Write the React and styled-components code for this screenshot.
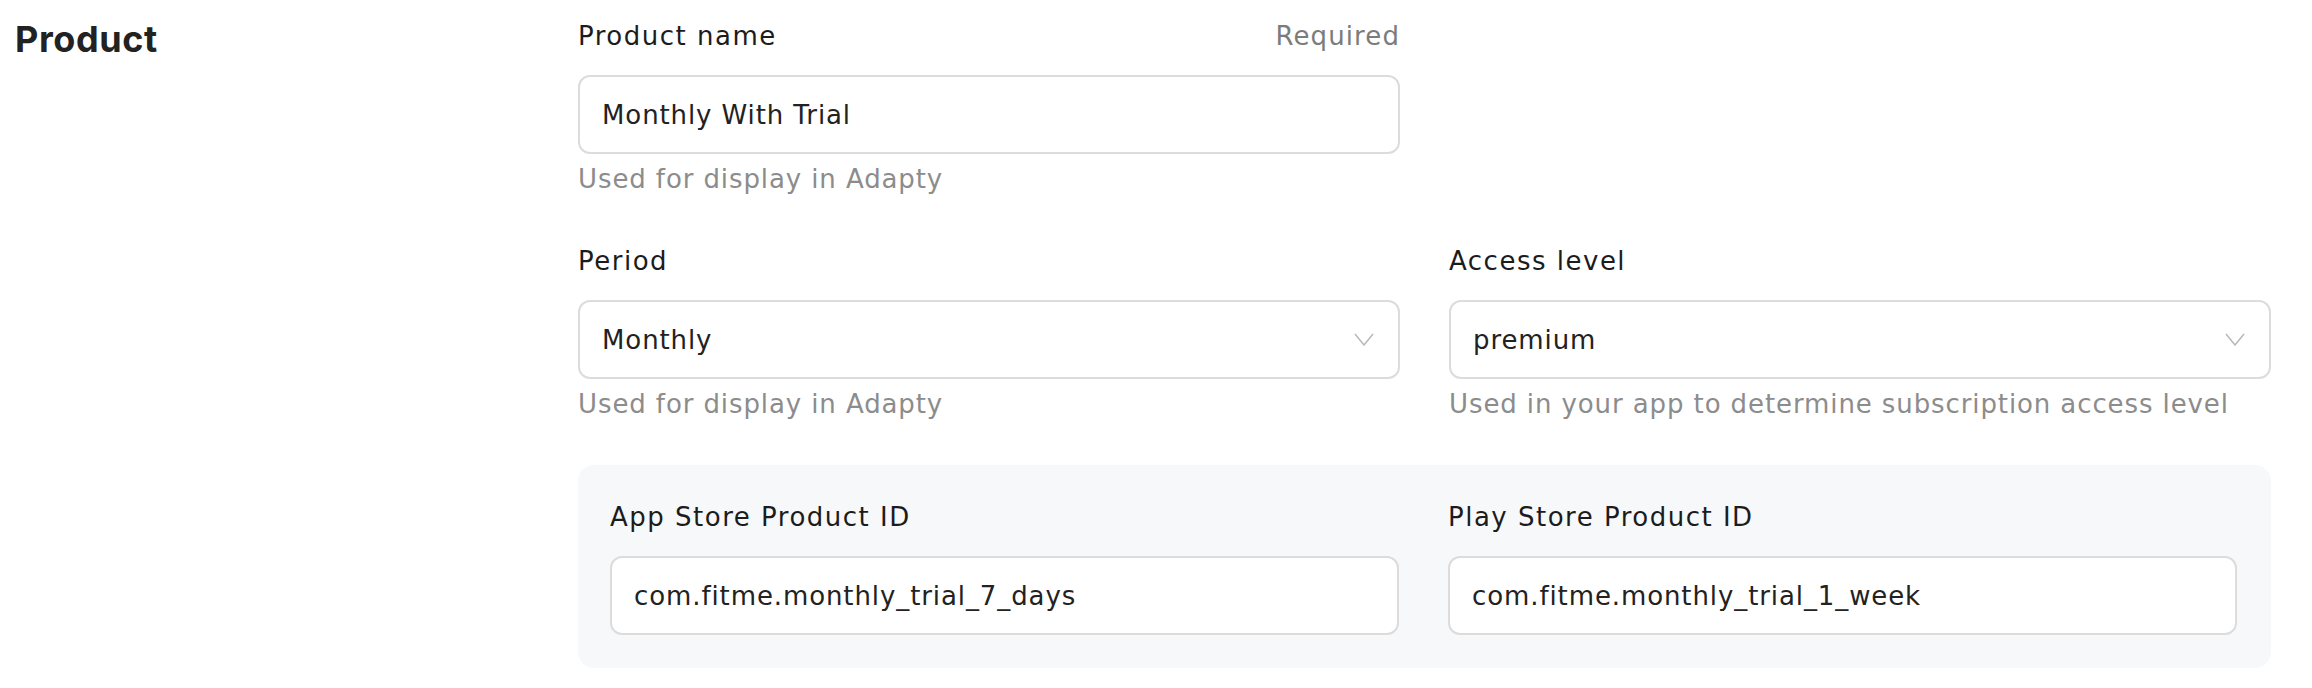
import styled, { createGlobalStyle } from "styled-components";

const GlobalStyle = createGlobalStyle`
  body {
    margin: 0;
    background: #fff;
    font-family: "DejaVu Sans", "Inter", sans-serif;
    color: #1f1f1f;
  }
`;

const Chevron = () => (
  <svg width="20" height="13" viewBox="0 0 20 13" fill="none">
    <polyline points="1,1 10,12 19,1" stroke="#b8b8b8" strokeWidth="1.5" />
  </svg>
);

const Field = ({ label, hint, value, required, select }) => (
  <FieldWrap>
    <LabelRow>
      <Label>{label}</Label>
      {required && <Required>Required</Required>}
    </LabelRow>
    <InputBox>
      <Value>{value}</Value>
      {select && <Chevron />}
    </InputBox>
    {hint && <Hint>{hint}</Hint>}
  </FieldWrap>
);

const App = () => {
  return (
    <>
      <GlobalStyle />
      <Section>
        <Heading>Product</Heading>
        <Form>
          <Row>
            <Field
              label="Product name"
              required
              value="Monthly With Trial"
              hint="Used for display in Adapty"
            />
            <div />
          </Row>
          <Row>
            <Field
              label="Period"
              value="Monthly"
              select
              hint="Used for display in Adapty"
            />
            <Field
              label="Access level"
              value="premium"
              select
              hint="Used in your app to determine subscription access level"
            />
          </Row>
          <StorePanel>
            <Field label="App Store Product ID" value="com.fitme.monthly_trial_7_days" />
            <Field label="Play Store Product ID" value="com.fitme.monthly_trial_1_week" />
          </StorePanel>
        </Form>
      </Section>
    </>
  );
};

export default App;

const Section = styled.div`
  display: flex;
  width: 2312px;
`;

const Heading = styled.h2`
  width: 563px;
  margin: 0;
  padding: 19px 0 0 15px;
  font-family: "Inter", sans-serif;
  font-size: 36px;
  line-height: 40px;
  font-weight: 700;
  letter-spacing: 0.6px;
  color: #222;
`;

const Form = styled.div`
  width: 1693px;
  padding-top: 18px;
  display: flex;
  flex-direction: column;
  gap: 46px;
`;

const Row = styled.div`
  display: grid;
  grid-template-columns: 1fr 1fr;
  column-gap: 49px;
`;

const FieldWrap = styled.div`
  display: flex;
  flex-direction: column;
`;

const LabelRow = styled.div`
  display: flex;
  justify-content: space-between;
  align-items: center;
  height: 36px;
  margin-bottom: 21px;
`;

const Label = styled.span`
  font-size: 26px;
  letter-spacing: 1.5px;
  color: #1c1c1c;
`;

const Required = styled.span`
  font-size: 26px;
  letter-spacing: 1.1px;
  color: #7c7c7c;
`;

const InputBox = styled.div`
  box-sizing: border-box;
  height: 79px;
  border: 2px solid #dcdcdc;
  border-radius: 12px;
  background: #fff;
  display: flex;
  align-items: center;
  justify-content: space-between;
  padding: 0 24px 0 22px;
`;

const Value = styled.span`
  font-size: 26px;
  letter-spacing: 0.9px;
  color: #222;
`;

const Hint = styled.div`
  margin-top: 7px;
  font-size: 26px;
  line-height: 36px;
  letter-spacing: 0.9px;
  color: #8c8c8c;
`;

const StorePanel = styled.div`
  display: grid;
  grid-template-columns: 1fr 1fr;
  column-gap: 49px;
  background: #f7f8fa;
  border-radius: 16px;
  padding: 34px 34px 33px 32px;
  margin-top: -3px;
`;
